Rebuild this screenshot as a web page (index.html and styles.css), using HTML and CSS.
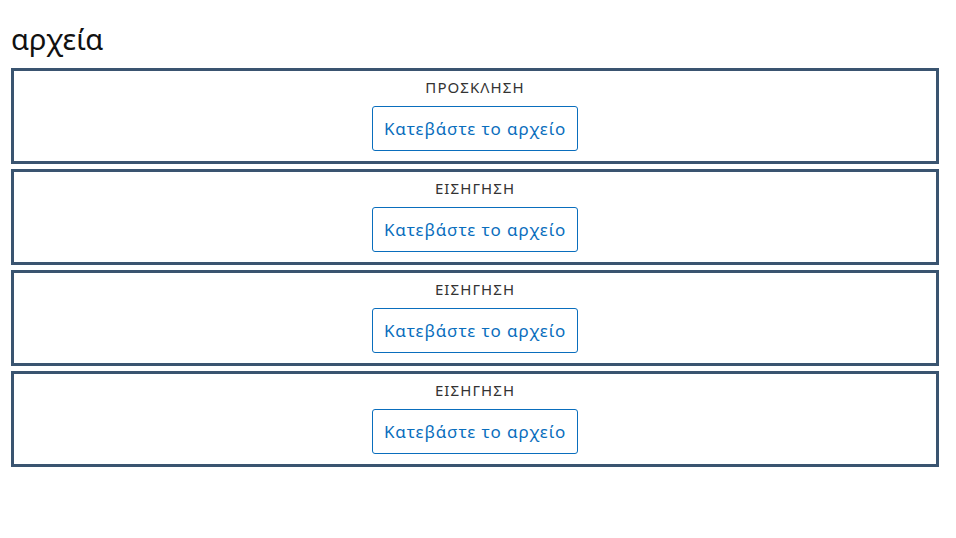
FILE: index.html
```html
<!DOCTYPE html>
<html lang="el">
<head>
<meta charset="utf-8">
<link rel="stylesheet" href="styles.css">
</head>
<body>
<div class="page">
  <h2 class="title">αρχεία</h2>
  <div class="files">
    <div class="file">
      <div class="label">ΠΡΟΣΚΛΗΣΗ</div>
      <a class="btn" href="#">Κατεβάστε το αρχείο</a>
    </div>
    <div class="file">
      <div class="label">ΕΙΣΗΓΗΣΗ</div>
      <a class="btn" href="#">Κατεβάστε το αρχείο</a>
    </div>
    <div class="file">
      <div class="label">ΕΙΣΗΓΗΣΗ</div>
      <a class="btn" href="#">Κατεβάστε το αρχείο</a>
    </div>
    <div class="file">
      <div class="label">ΕΙΣΗΓΗΣΗ</div>
      <a class="btn" href="#">Κατεβάστε το αρχείο</a>
    </div>
  </div>
</div>
</body>
</html>
```
FILE: styles.css
```css
html, body {
  margin: 0;
  padding: 0;
  background: #fff;
}
body {
  font-family: "Noto Sans", "Lato", sans-serif;
  color: #222;
}
.page {
  padding: 20px 0 0 11px;
  width: 928px;
}
.title {
  margin: 0 0 10px 0;
  font-size: 29px;
  font-weight: 400;
  line-height: 38px;
  color: #111;
}
.files {
  display: flex;
  flex-direction: column;
  gap: 5px;
}
.file {
  border: 3px solid #3a5470;
  display: flex;
  flex-direction: column;
  align-items: center;
  padding: 7px 0 10px;
}
.label {
  font-size: 15px;
  line-height: 18px;
  height: 18px;
  color: #333;
  letter-spacing: 1.1px;
}
.btn {
  margin-top: 10px;
  height: 45px;
  box-sizing: border-box;
  display: flex;
  align-items: center;
  padding: 0 11px;
  border: 1px solid #0a6ebd;
  border-radius: 3px;
  color: #0a6ebd;
  font-size: 17px;
  letter-spacing: 0.9px;
  text-decoration: none;
}
```
